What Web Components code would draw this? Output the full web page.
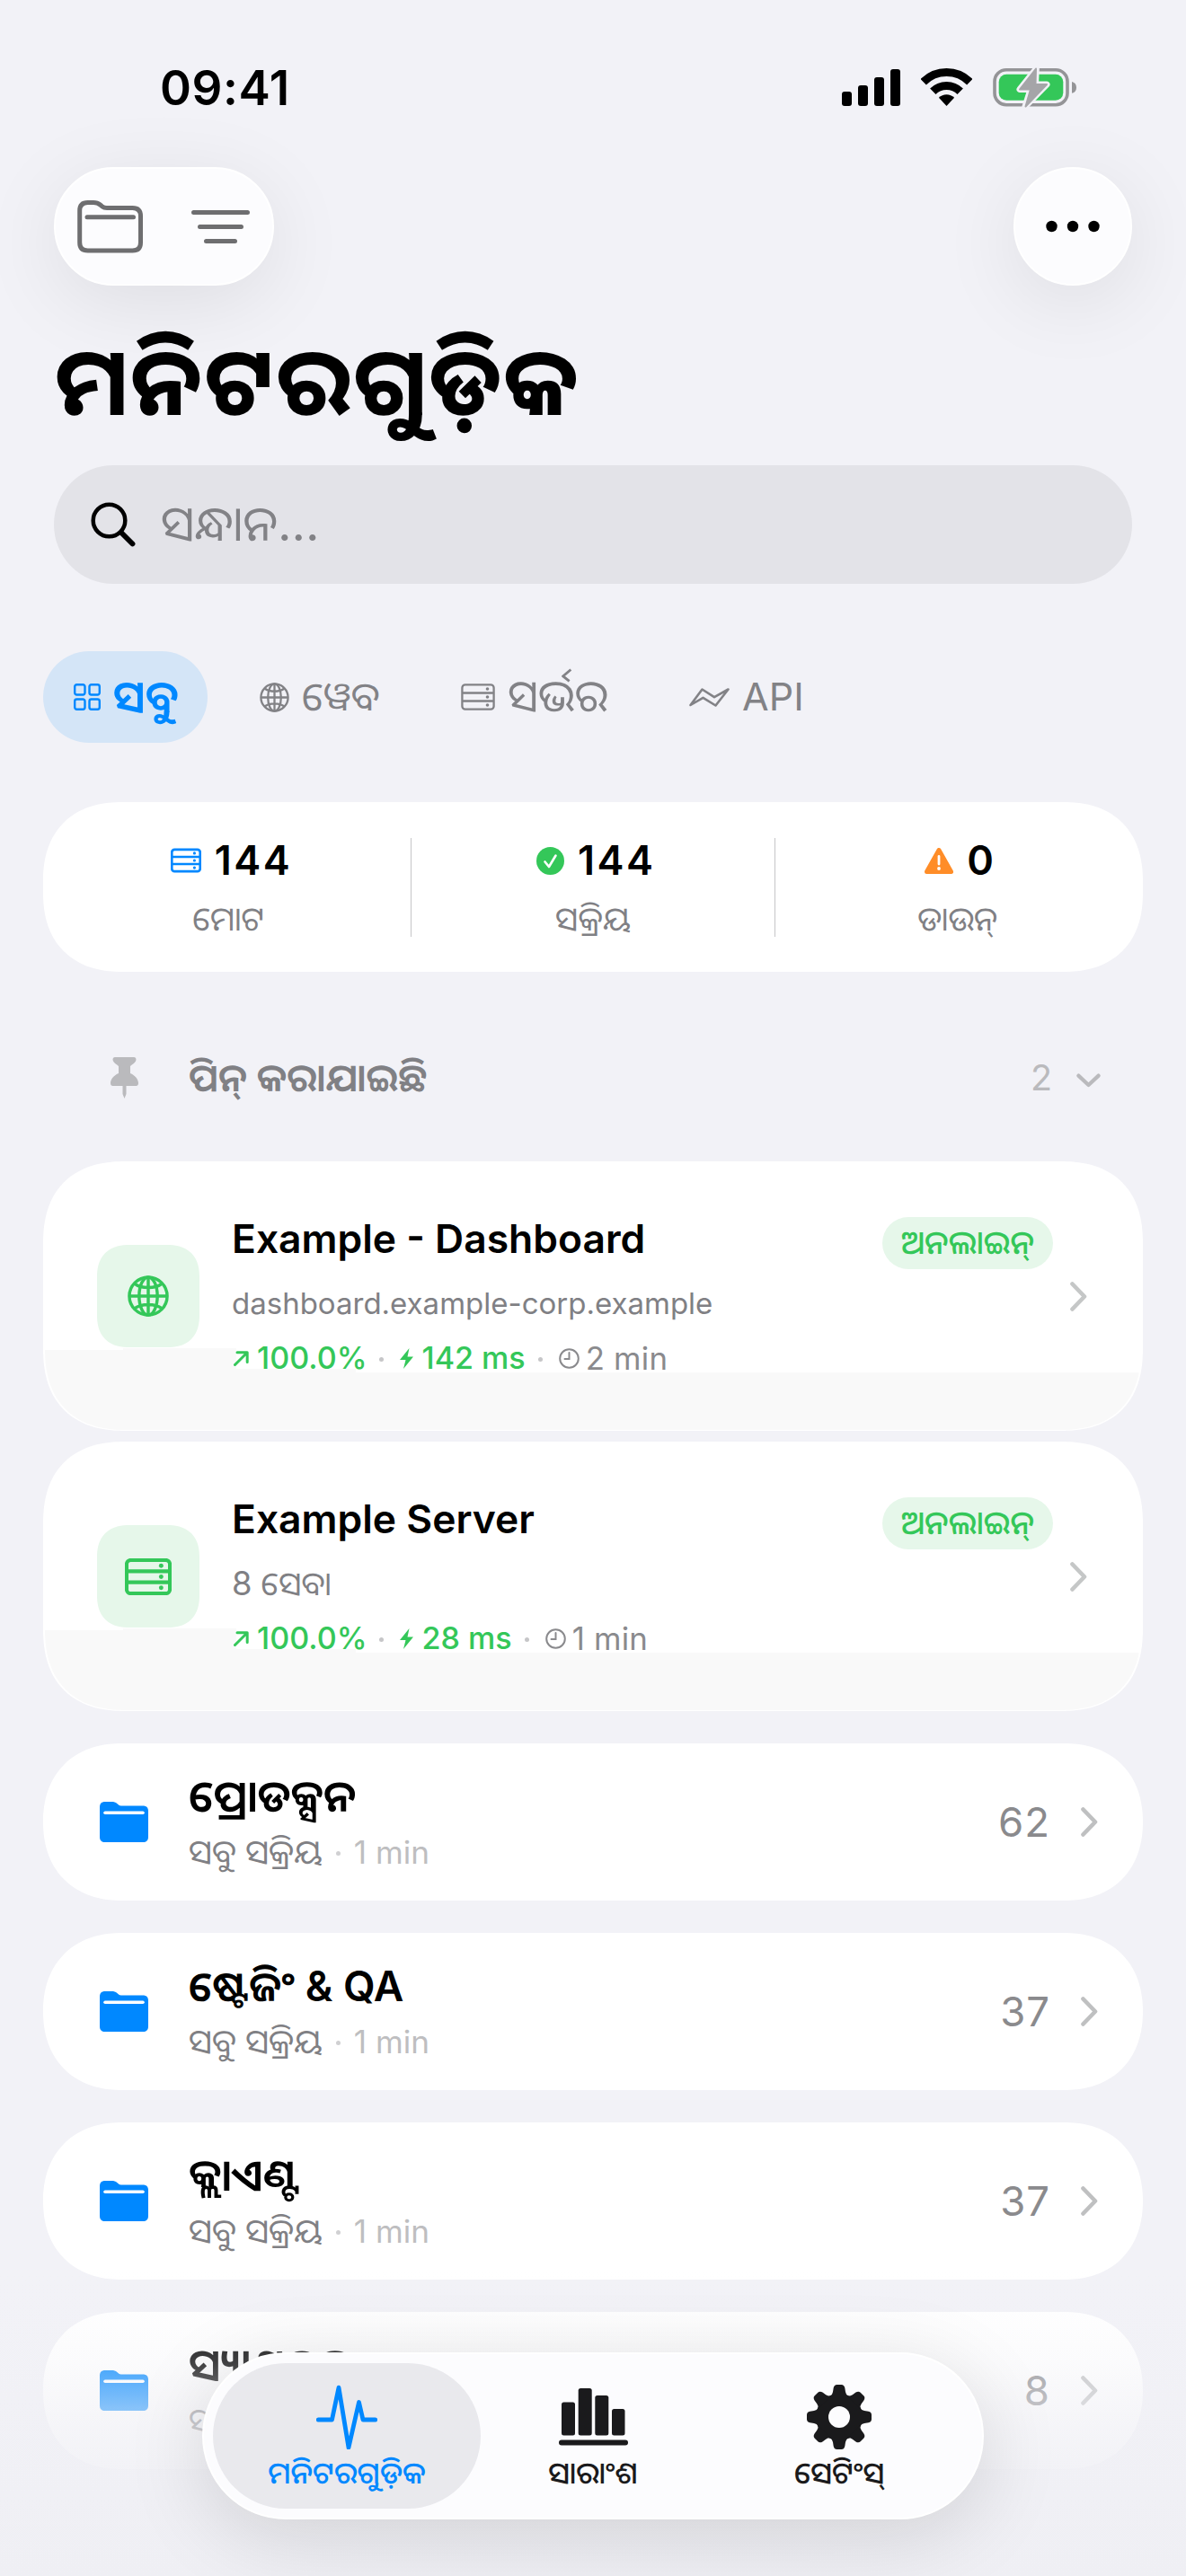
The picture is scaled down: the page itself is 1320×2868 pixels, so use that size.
<!DOCTYPE html>
<html lang="or">
<head>
<meta charset="utf-8">
<title>ମନିଟରଗୁଡ଼ିକ</title>
<style>
    body {
        margin: 0;
        background: #f2f2f7;
        color: #000;
        font-family: Inter, "Noto Sans Oriya", sans-serif;
        -webkit-font-smoothing: antialiased;
    }
</style>
</head>
<body>
<monitor-app>
    <status-bar>09:41</status-bar>
    <nav-toolbar></nav-toolbar>
    <page-title>ମନିଟରଗୁଡ଼ିକ</page-title>
    <search-field>ସନ୍ଧାନ...</search-field>

    <filter-bar>
        <filter-chip icon="grid" active style="width: 183px">ସବୁ</filter-chip>
        <filter-chip icon="globe" style="width: 200px; --size: 44.4px">ୱେବ</filter-chip>
        <filter-chip icon="server" style="width: 230px; --size: 49px">ସର୍ଭର</filter-chip>
        <filter-chip icon="api" style="--size: 43px">API</filter-chip>
    </filter-bar>

    <stats-card>
        <stat-item icon="server" color="#0088ff" value="144" style="--icon-w: 34px; --icon-h: 28px; --stroke: 3px">ମୋଟ</stat-item>
        <stat-item icon="check" color="#34c759" value="144">ସକ୍ରିୟ</stat-item>
        <stat-item icon="warning" color="#ff8d28" value="0">ଡାଉନ୍</stat-item>
    </stats-card>

    <section-header count="2">ପିନ୍ କରାଯାଇଛି</section-header>

    <card-list style="--gap: 12px">
        <monitor-card icon="globe" uptime="100.0%" latency="142 ms" checked="2 min" style="--icon-w: 46px; --icon-h: 46px; --stroke: 2.5px">
            Example - Dashboard
            <span slot="detail">dashboard.example-corp.example</span>
            <span slot="status">ଅନଲାଇନ୍</span>
        </monitor-card>
        <monitor-card icon="server" uptime="100.0%" latency="28 ms" checked="1 min" style="--icon-w: 52px; --icon-h: 41px; --detail-size: 36.4px; --stroke: 3px">
            Example Server
            <span slot="detail">8 ସେବା</span>
            <span slot="status">ଅନଲାଇନ୍</span>
        </monitor-card>
    </card-list>

    <card-list style="--gap: 36px; margin-top: 36px">
        <folder-card count="62" checked="1 min" style="--size: 48.9px">ପ୍ରୋଡକ୍ସନ<span slot="detail">ସବୁ ସକ୍ରିୟ</span></folder-card>
        <folder-card count="37" checked="1 min" style="--size: 46.2px">ଷ୍ଟେଜିଂ &amp; QA<span slot="detail">ସବୁ ସକ୍ରିୟ</span></folder-card>
        <folder-card count="37" checked="1 min" style="--size: 49px">କ୍ଲାଏଣ୍ଟ<span slot="detail">ସବୁ ସକ୍ରିୟ</span></folder-card>
        <folder-card count="8" checked="1 min" style="--size: 48.9px">ସ୍ୟାଣ୍ଡବକ୍ସ<span slot="detail">ସବୁ ସକ୍ରିୟ</span></folder-card>
    </card-list>

    <tab-bar slot="tabs">
        <tab-item icon="pulse" active>ମନିଟରଗୁଡ଼ିକ</tab-item>
        <tab-item icon="bars">ସାରାଂଶ</tab-item>
        <tab-item icon="gear">ସେଟିଂସ୍</tab-item>
    </tab-bar>
</monitor-app>

<script>
// name: [width, height, svg content]
const ICONS = {
    signal: [65, 41, `<g fill="currentColor"><rect y="25" width="11" height="16" rx="3"/><rect x="18" y="18" width="11" height="23" rx="3"/><rect x="36" y="9" width="11" height="32" rx="3"/><rect x="54" width="11" height="41" rx="3"/></g>`],
    wifi: [57, 42, `<g fill="none" stroke="currentColor" stroke-width="9"><path d="M2.7 15.2A36.5 36.5 0 0 1 54.3 15.2"/><path d="M13.3 25.8A21.5 21.5 0 0 1 43.7 25.8"/></g><path fill="currentColor" d="M28.5 42l-8.6-9.2A12 12 0 0 1 37.1 32.8z"/>`],
    battery: [93, 45, `<rect x="2" y="2.7" width="81" height="39" rx="13" fill="none" stroke="#949497" stroke-width="3.6"/>
        <path d="M88 16c3.5.8 5 3.4 5 6.4s-1.5 5.6-5 6.4z" fill="#949497"/><rect x="6.7" y="7.7" width="71.6" height="29" rx="8.5" fill="#34c759"/>
        <path d="M48.3 1.5L30 24.5H42L36 43.5 60 19H47.5z" fill="#a5a5a8" stroke="#f2f2f7" stroke-width="7" stroke-linejoin="round"/>
        <path d="M48 1.5L30 24.5H42L36.5 43.5 60 19H47.5z" fill="#a5a5a8" stroke="#a5a5a8" stroke-width="2" stroke-linejoin="round"/>`],
    folderOutline: [73, 59, `<g fill="none" stroke="currentColor" stroke-width="5" stroke-linecap="round" stroke-linejoin="round"><path d="M2.7 47V11.5c0-6 3-9 9-9H18c4 0 5.500.8 7.500 2.500l2 1.700c1.500 1.200 3 1.800 5.500 1.800h28.500c6 0 9 3 9 9V47c0 6-3 9-9 9H11.700c-6 0-9-3-9-9z"/><path d="M11 18.7H62.5"/></g>`],
    lines: [65, 37, `<path d="M2.5 2.5h60M9.5 18.5h46M16.5 34.5h32" fill="none" stroke="currentColor" stroke-width="5" stroke-linecap="round"/>`],
    dots: [60, 14, `<g fill="currentColor"><circle cx="6.5" cy="7" r="6.2"/><circle cx="30" cy="7" r="6.2"/><circle cx="53.5" cy="7" r="6.2"/></g>`],
    search: [50, 50, `<g fill="none" stroke="currentColor" stroke-linecap="round"><circle cx="20.5" cy="20.5" r="17.8" stroke-width="4.5"/><path d="M34 34L46.5 46.5" stroke-width="5.8"/></g>`],
    grid: [30, 30, `<g fill="none" stroke="currentColor" stroke-width="2.4"><rect x="1.2" y="1.2" width="11.3" height="11.3" rx="2.2"/><rect x="17.5" y="1.2" width="11.3" height="11.3" rx="2.2"/><rect x="1.2" y="17.5" width="11.3" height="11.3" rx="2.2"/><rect x="17.5" y="17.5" width="11.3" height="11.3" rx="2.2"/></g>`],
    globe: [33, 33, `<g class="line" fill="none" stroke="currentColor"><circle cx="16.5" cy="16.5" r="15.1"/><ellipse cx="16.5" cy="16.5" rx="7.3" ry="15.1"/><path d="M16.5 1v31M1 16.5h31M5.5 6.5c5.5 4.3 16.5 4.3 22 0M5.5 26.5c5.5-4.3 16.5-4.3 22 0"/></g>`],
    server: [38, 30, `<g class="line" fill="none" stroke="currentColor"><rect x="1.4" y="1.4" width="35.2" height="27.2" rx="3.4"/><path d="M1 10.5h36M1 19.5h36"/></g><g fill="currentColor"><circle cx="29.5" cy="6" r="1.8"/><circle cx="29.5" cy="15" r="1.8"/><circle cx="29.5" cy="24" r="1.8"/></g>`],
    api: [45, 21, `<path d="M1.5 19L14.5 1.5 28 10.2 43.5 1.5 29.5 19.5 15.5 10.8z" fill="none" stroke="currentColor" stroke-width="2.6" stroke-linejoin="round"/>`],
    check: [31, 31, `<circle cx="15.5" cy="15.5" r="15.5" fill="currentColor"/><path d="M9.5 16.5l4.5 5.5L21.5 9.5" fill="none" stroke="#fff" stroke-width="2.6" stroke-linecap="round" stroke-linejoin="round"/>`],
    warning: [32, 29, `<path d="M16 2.5L29.500 26.500H2.500z" fill="currentColor" stroke="currentColor" stroke-width="5" stroke-linejoin="round"/><path d="M16 9.5v8.5" stroke="#fff" stroke-width="2.8" stroke-linecap="round"/><circle cx="16" cy="23" r="1.9" fill="#fff"/>`],
    pin: [31, 46, `<path fill="currentColor" d="M5 0h21c2 0 3 2 2.200 4-1 2.700-4 4-6.200 6v8c5 2 9 6.500 9 11 0 2-1 3-2.500 3H2.500C1 32 0 31 0 29c0-4.500 4-9 9-11v-8C6.800 8 3.800 6.700 2.800 4 2 2 3 0 5 0zM13.500 32h4v9l-2 5-2-5z"/>`],
    chevronDown: [27, 16, `<path d="M2.4 2.6L13.5 13 24.6 2.6" fill="none" stroke="currentColor" stroke-width="4.2" stroke-linecap="round" stroke-linejoin="round"/>`],
    chevron: [19, 33, `<path d="M2.5 2.5L16 16.5 2.5 30.5" fill="none" stroke="currentColor" stroke-width="4.6" stroke-linecap="round" stroke-linejoin="round"/>`],
    arrow: [17, 17, `<path d="M1.5 15.5L15 2M4 1.8H15.2V12.5" fill="none" stroke="currentColor" stroke-width="3" stroke-linecap="round" stroke-linejoin="round"/>`],
    bolt: [15, 23, `<path d="M10.5 0L0 13h6.500L4 23 15 9.500H8.500z" fill="currentColor"/>`],
    clock: [23, 23, `<g fill="none" stroke="currentColor" stroke-width="2" stroke-linecap="round"><circle cx="11.5" cy="11.5" r="10.3"/><path d="M11.5 5v7H6.5"/></g>`],
    folder: [54, 45, `<path fill="currentColor" d="M0 39V6c0-4 2-6 6-6h7c3 0 4.500.5 6.300 2l1.500 1.200c1.200 1 2.200 1.300 4.200 1.300h23c4 0 6 2 6 6V39c0 4-2 6-6 6H6c-4 0-6-2-6-6z"/><path d="M6 12.2h42" stroke="#fff" stroke-width="3.6" stroke-linecap="round"/>`],
    pulse: [68, 72, `<path d="M2.3 39H17.5L25 3.2 36 70 47.5 19.5 52 39H65.7" fill="none" stroke="currentColor" stroke-width="4.8" stroke-linecap="round" stroke-linejoin="round"/>`],
    bars: [77, 64, `<g fill="currentColor"><rect x="3" y="15.5" width="15" height="37" rx="2.5"/><rect x="21.7" width="15" height="52.5" rx="2.5"/><rect x="40.3" y="8" width="15" height="44.5" rx="2.5"/><rect x="59" y="23" width="14.5" height="29.5" rx="2.5"/><rect y="57.5" width="77" height="6" rx="3"/></g>`],
    gear: [72, 72, `<g fill="currentColor"><circle cx="36" cy="36" r="26"/>${[0, 45, 90, 135, 180, 225, 270, 315].map(a => `<path transform="rotate(${a} 36 36)" d="M26 13q2.500-2 3-5l.7-4.500Q30.500 0 33.500 0h5q3 0 3.800 3.500L43 8q.5 3 3 5z"/>`).join('')}</g><circle cx="36" cy="36" r="12" fill="#fcfcfe"/>`]
};

// Registers an element whose shadow root is the given styles and markup
function define(name, template) {
    customElements.define(name, class extends HTMLElement {
        constructor() {
            super();
            this.attachShadow({ mode: 'open' });
        }

        connectedCallback() {
            const attr = key => this.getAttribute(key) || '';
            this.shadowRoot.innerHTML = template(attr);
        }
    });
}

class UiIcon extends HTMLElement {
    constructor() {
        super();
        this.shadow = this.attachShadow({ mode: 'open' });
    }

    connectedCallback() {
        const [w, h, body] = ICONS[this.getAttribute('name')];
        this.shadow.innerHTML = `
            <style>
                :host { display: block; flex: none; }
                svg { display: block; width: var(--w, ${w}px); height: var(--h, ${h}px); }
                .line { stroke-width: var(--stroke, 2.3px); }
            </style>
            <svg viewBox="0 0 ${w} ${h}" aria-hidden="true">${body}</svg>
        `;
    }
}
customElements.define('ui-icon', UiIcon);

define('monitor-app', () => `
    <style>
        :host { display: flex; flex-direction: column; position: relative; width: 1320px; height: 2868px; overflow: hidden; background: #f2f2f7; }
        /* content dissolves under the floating tab bar */
        .fade { position: absolute; left: 0; right: 0; bottom: 0; height: 340px; pointer-events: none;
            background: linear-gradient(rgba(240,240,245,0), rgba(240,240,245,.06) 12%, rgba(240,240,245,.27) 30%, rgba(240,240,245,.62) 48%, rgba(240,240,245,.84) 65%, #efeff4); }
        .tabs { position: absolute; left: 0; right: 0; bottom: 63px; display: flex; justify-content: center; }
    </style>
    <slot></slot>
    <div class="fade"></div>
    <div class="tabs"><slot name="tabs"></slot></div>
`);

define('status-bar', () => `
    <style>
        :host { display: flex; box-sizing: border-box; flex: none; height: 186px; padding: 68px 122px 0 178px; justify-content: space-between; align-items: flex-start; }
        .time { font-size: 53px; line-height: 60px; font-weight: 600; letter-spacing: .6px; }
        .icons { display: flex; gap: 23px; height: 58px; align-items: center; }
    </style>
    <div class="time"><slot></slot></div>
    <div class="icons"><ui-icon name="signal"></ui-icon><ui-icon name="wifi"></ui-icon><ui-icon name="battery"></ui-icon></div>
`);

define('nav-toolbar', () => `
    <style>
        :host { display: flex; flex: none; height: 132px; padding: 0 60px; justify-content: space-between; }
        .glass { display: flex; box-sizing: border-box; align-items: center; height: 132px; border-radius: 66px; background: #fcfcfe; border: 2px solid #fff; box-shadow: 0 18px 90px rgba(0,0,0,.085); }
        .group { width: 245px; gap: 54px; padding-left: 24px; color: #6e6e70; }
        .more { width: 132px; justify-content: center; color: #000; }
    </style>
    <div class="glass group"><ui-icon name="folderOutline"></ui-icon><ui-icon name="lines"></ui-icon></div>
    <div class="glass more"><ui-icon name="dots"></ui-icon></div>
`);

define('page-title', () => `
    <style>
        :host { display: block; position: relative; flex: none; margin: 46px 62px 0 61px; font-size: 105px; line-height: 120px; font-weight: 700; letter-spacing: 2.2px; white-space: nowrap; }
    </style>
    <slot></slot>
`);

define('search-field', () => `
    <style>
        :host { display: flex; flex: none; position: relative; height: 132px; margin: 34px 60px 0; padding-left: 41px; box-sizing: border-box; align-items: center; gap: 28px; border-radius: 66px; background: #e3e3e8; }
        .hint { color: #828286; font-size: 54px; line-height: 64px; margin-top: -3px; }
    </style>
    <ui-icon name="search"></ui-icon><div class="hint"><slot></slot></div>
`);

define('filter-bar', () => `
    <style>
        :host { display: flex; flex: none; gap: 24px; margin: 75px 48px 0; }
    </style>
    <slot></slot>
`);

define('filter-chip', attr => `
    <style>
        :host { display: flex; box-sizing: border-box; height: 102px; padding-left: 34px; gap: 14px; align-items: center; border-radius: 51px; color: #828286; white-space: nowrap; }
        :host([active]) { background: #d4e5f7; color: #0088ff; font-weight: 600; }
        .label { font-size: var(--size, 49.5px); line-height: 60px; margin-top: -3px; }
    </style>
    <ui-icon name="${attr('icon')}"></ui-icon><div class="label"><slot></slot></div>
`);

define('stats-card', () => `
    <style>
        :host { display: flex; flex: none; box-sizing: border-box; height: 189px; margin: 66px 48px 0; padding: 0 4px; border-radius: 88px; corner-shape: superellipse(1.2); background: #fff; }
        ::slotted(:not(:last-child)) { border-right: 1px solid transparent; border-image: linear-gradient(transparent 41px, #c6c6c8 41px, #c6c6c8 149px, transparent 149px) 1; }
    </style>
    <slot></slot>
`);

define('stat-item', attr => `
    <style>
        :host { display: flex; flex: 1; flex-direction: column; align-items: center; padding-top: 40px; }
        .row { display: flex; align-items: center; gap: 15px; height: 50px; padding-left: 4px; }
        ui-icon { color: ${attr('color')}; --w: var(--icon-w); --h: var(--icon-h); }
        b { font-size: 45px; line-height: 50px; font-weight: 600; letter-spacing: 2.5px; margin-right: -2.5px; }
        .label { margin-top: 17px; font-size: 36.7px; line-height: 46px; color: #808084; }
    </style>
    <div class="row"><ui-icon name="${attr('icon')}"></ui-icon><b>${attr('value')}</b></div>
    <div class="label"><slot></slot></div>
`);

define('section-header', attr => `
    <style>
        :host { display: flex; flex: none; box-sizing: border-box; height: 211px; margin: 0 48px; padding: 25px 47px 0 60px; align-items: center; color: #bababd; }
        .icon { width: 60px; display: flex; justify-content: center; margin-right: 42px; }
        .title { flex: 1; color: #808084; font-size: 42.9px; line-height: 56px; font-weight: 600; margin-top: -3px; }
        .count { font-size: 39.5px; line-height: 56px; margin-right: 27px; }
        .chev { margin-top: 5px; }
    </style>
    <div class="icon"><ui-icon name="pin"></ui-icon></div>
    <div class="title"><slot></slot></div>
    <div class="count">${attr('count')}</div>
    <ui-icon class="chev" name="chevronDown"></ui-icon>
`);

define('card-list', () => `
    <style>
        :host { display: flex; flex: none; flex-direction: column; gap: var(--gap); margin: 0 48px; }
    </style>
    <slot></slot>
`);

define('monitor-card', attr => `
    <style>
        :host { display: flex; flex: none; position: relative; box-sizing: border-box; height: 300px; padding: 0 62px 0 60px; overflow: hidden; border-radius: 92px; corner-shape: superellipse(1.25); background: #fff; }
        /* stepped tint along the lower edge */
        .tint { position: absolute; inset: 0 2px 1px; background: #f9f9f9; clip-path: polygon(0 210px, 87px 210px, 87px 208px, 213px 208px, 213px 231px, 346px 231px, 346px 235px, 100% 235px, 100% 100%, 0 100%); border-radius: 91px; corner-shape: superellipse(1.25); }
        .tile, .body, .badge, .chev { position: relative; }
        .tile { display: flex; align-self: center; align-items: center; justify-content: center; width: 114px; height: 114px; border-radius: 36px; corner-shape: superellipse(1.25); background: #e6f7ea; color: #34c759; --w: var(--icon-w); --h: var(--icon-h); }
        .body { flex: 1; margin-left: 36px; padding-top: 59px; white-space: nowrap; }
        .title { font-size: 44.4px; line-height: 54px; font-weight: 600; }
        .detail { margin-top: 22px; font-size: var(--detail-size, 33px); line-height: 46px; color: #808084; }
        .meta { display: flex; align-items: center; height: 44px; margin-top: 16px; padding-left: 2px; font-size: 34.1px; line-height: 44px; font-weight: 500; color: #34c759; }
        .meta ui-icon { --w: initial; --h: initial; margin-right: 9px; }
        .meta i { width: 5px; height: 5px; border-radius: 50%; background: #c6c6c8; margin: 2px 18px 0 14px; }
        .meta .time { color: #8a8a8d; display: flex; align-items: center; font-size: 34.8px; font-weight: 400; letter-spacing: .2px; }
        .meta .time ui-icon { margin-right: 7px; }
        .badge { display: flex; align-items: center; justify-content: center; width: 190px; height: 58px; margin-top: 62px; border-radius: 29px; background: #e6f7ea; color: #34c759; font-size: 36.4px; font-weight: 500; line-height: 50px; }
        .badge div { margin-top: -3px; }
        .chev { align-self: center; margin-left: 19px; color: #c5c7c7; }
    </style>
    <div class="tint"></div>
    <div class="tile"><ui-icon name="${attr('icon')}"></ui-icon></div>
    <div class="body">
        <div class="title"><slot></slot></div>
        <div class="detail"><slot name="detail"></slot></div>
        <div class="meta">
            <ui-icon name="arrow"></ui-icon>${attr('uptime')}<i></i>
            <ui-icon name="bolt"></ui-icon>${attr('latency')}<i></i>
            <span class="time"><ui-icon name="clock"></ui-icon>${attr('checked')}</span>
        </div>
    </div>
    <div class="badge"><div><slot name="status"></slot></div></div>
    <ui-icon class="chev" name="chevron"></ui-icon>
`);

define('folder-card', attr => `
    <style>
        :host { display: flex; flex: none; box-sizing: border-box; height: 175px; padding: 0 50px 0 60px; align-items: center; border-radius: 87.5px; corner-shape: superellipse(1.15); background: #fff; }
        .icon { width: 60px; display: flex; justify-content: center; color: #0088ff; }
        .body { flex: 1; align-self: flex-start; margin-left: 42px; padding-top: 31px; white-space: nowrap; }
        .title { font-size: var(--size); line-height: 56px; font-weight: 600; }
        .sub { display: flex; align-items: center; margin-top: 11px; height: 46px; font-size: 37.3px; line-height: 46px; color: #808084; }
        .sub i { width: 5px; height: 5px; border-radius: 50%; background: #d0d0d2; margin: 2px 15px 0; }
        .sub .ago { color: #bebec0; font-size: 35.2px; }
        .count { font-size: 45.5px; line-height: 56px; letter-spacing: 1px; margin-right: 34px; color: #8a8a8d; }
        .chev { color: #bfc0c1; }
    </style>
    <div class="icon"><ui-icon name="folder"></ui-icon></div>
    <div class="body">
        <div class="title"><slot></slot></div>
        <div class="sub"><slot name="detail"></slot><i></i><span class="ago">${attr('checked')}</span></div>
    </div>
    <div class="count">${attr('count')}</div>
    <ui-icon class="chev" name="chevron"></ui-icon>
`);

define('tab-bar', () => `
    <style>
        :host { display: flex; box-sizing: border-box; width: 870px; height: 186px; padding: 10px 22px; border: 2px solid #fff; border-radius: 93px; background: #fcfcfe; box-shadow: 0 18px 90px rgba(0,0,0,.13); }
    </style>
    <slot></slot>
`);

define('tab-item', attr => `
    <style>
        :host { display: flex; flex: none; box-sizing: border-box; flex-direction: column; align-items: center; width: 298px; height: 162px; margin: 0 -12px; padding-top: 24px; border-radius: 81px; color: #1a1a1c; }
        :host([active]) { background: #e9e9ed; color: #0088ff; }
        .icon { display: flex; align-items: center; height: 72px; }
        .label { margin-top: 6px; font-size: 33.6px; line-height: 40px; font-weight: 500; }
    </style>
    <div class="icon"><ui-icon name="${attr('icon')}"></ui-icon></div>
    <div class="label"><slot></slot></div>
`);
</script>
</body>
</html>
